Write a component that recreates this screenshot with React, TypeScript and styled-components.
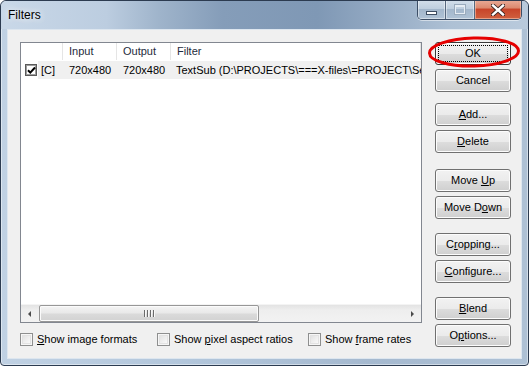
import React from "react";
import styled, { createGlobalStyle } from "styled-components";

const GlobalStyle = createGlobalStyle`
  html, body {
    margin: 0;
    padding: 0;
    background: #ffffff;
  }
  body {
    font-family: "Liberation Sans", Arial, sans-serif;
    font-size: 11px;
    color: #000;
  }
`;

const filters = [
  {
    enabled: true,
    tag: "[C]",
    input: "720x480",
    output: "720x480",
    name: "TextSub (D:\\PROJECTS\\===X-files\\=PROJECT\\Season 1\\subtitles\\episode01.srt)",
  },
];

const buttonGroups: { space: number; items: { label: string; key?: number; isDefault?: boolean }[] }[] = [
  { space: 0, items: [{ label: "OK", isDefault: true }, { label: "Cancel" }] },
  { space: 11, items: [{ label: "Add...", key: 0 }, { label: "Delete", key: 0 }] },
  { space: 16, items: [{ label: "Move Up", key: 5 }, { label: "Move Down", key: 6 }] },
  { space: 14, items: [{ label: "Cropping...", key: 1 }, { label: "Configure...", key: 0 }] },
  { space: 14, items: [{ label: "Blend", key: 0 }, { label: "Options...", key: 1 }] },
];

const options = [
  { label: "Show image formats", key: 0, width: 137 },
  { label: "Show pixel aspect ratios", key: 5, width: 151 },
  { label: "Show frame rates", key: 5, width: 0 },
];

// underline the mnemonic letter like a win32 dialog does
const Mnemonic = ({ text, at }: { text: string; at?: number }) => {
  if (at === undefined) return <span>{text}</span>;
  return (
    <span>
      {text.slice(0, at)}
      <u>{text[at]}</u>
      {text.slice(at + 1)}
    </span>
  );
};

const App = () => {
  return (
    <>
      <GlobalStyle />
      <Window>
        <TitleBar>
          <Title>Filters</Title>
          <CaptionButtons>
            <CaptionButton $width={27}>
              <MinIcon />
            </CaptionButton>
            <CaptionButton $width={28}>
              <MaxIcon />
            </CaptionButton>
            <CloseButton>
              <svg width="14" height="12" viewBox="0 0 14 12">
                <path d="M2 1.5 L12 10.5 M12 1.5 L2 10.5" stroke="#3a2320" strokeWidth="4.2" strokeLinecap="square" />
                <path d="M2 1.5 L12 10.5 M12 1.5 L2 10.5" stroke="#ffffff" strokeWidth="2.4" strokeLinecap="square" />
              </svg>
            </CloseButton>
          </CaptionButtons>
        </TitleBar>

        <Client>
          <LeftPane>
            <ListView>
              <Header>
                <HeaderCell $width={42} />
                <HeaderCell $width={54}>Input</HeaderCell>
                <HeaderCell $width={54}>Output</HeaderCell>
                <HeaderCell $width={0}>Filter</HeaderCell>
              </Header>
              {filters.map((f) => (
                <Row key={f.name}>
                  <CheckCell>
                    <ListCheck>
                      {f.enabled && (
                        <svg width="9" height="9" viewBox="0 0 9 9">
                          <polyline points="1,4.2 3.3,6.6 8,1.5" fill="none" stroke="#000" strokeWidth="2" />
                        </svg>
                      )}
                    </ListCheck>
                  </CheckCell>
                  <RowBody>
                    <Cell $width={24} $pad={3}>{f.tag}</Cell>
                    <Cell $width={54} $pad={7}>{f.input}</Cell>
                    <Cell $width={54} $pad={7}>{f.output}</Cell>
                    <Cell $width={0} $pad={6}>{f.name}</Cell>
                  </RowBody>
                </Row>
              ))}
              <HScroll>
                <ScrollArrow>
                  <ArrowLeft />
                </ScrollArrow>
                <Track>
                  <Thumb style={{ width: 220 }}>
                    <Grip>
                      <span />
                      <span />
                      <span />
                      <span />
                    </Grip>
                  </Thumb>
                </Track>
                <ScrollArrow>
                  <ArrowRight />
                </ScrollArrow>
              </HScroll>
            </ListView>

            <OptionsRow>
              {options.map((o) => (
                <OptionItem key={o.label} $width={o.width}>
                  <CheckBox />
                  <Mnemonic text={o.label} at={o.key} />
                </OptionItem>
              ))}
            </OptionsRow>
          </LeftPane>

          <ButtonColumn>
            {buttonGroups.map((g, i) => (
              <ButtonGroup key={i} $space={g.space}>
                {g.items.map((b) => (
                  <PushButton key={b.label} $default={!!b.isDefault}>
                    <Mnemonic text={b.label} at={b.key} />
                  </PushButton>
                ))}
              </ButtonGroup>
            ))}
          </ButtonColumn>

          <Annotation width="94" height="32" viewBox="0 0 94 32">
            <ellipse cx="47" cy="16" rx="44.5" ry="14" fill="none" stroke="#e60000" strokeWidth="3" transform="rotate(-1.5 47 16)" />
          </Annotation>
        </Client>
      </Window>
    </>
  );
};

const Window = styled.div`
  width: 529px;
  height: 366px;
  box-sizing: border-box;
  border: 1px solid #2c3b50;
  border-radius: 6px 6px 4px 4px;
  padding: 0 6px 6px;
  background: linear-gradient(to right, #c0d1e3 0%, #b2c6db 35%, #a5b9cf 70%, #aec1d5 100%);
  box-shadow: inset 0 0 0 1px rgba(255, 255, 255, 0.45);
  display: flex;
  flex-direction: column;
  overflow: hidden;
`;

const TitleBar = styled.div`
  height: 28px;
  margin: 0 -6px;
  padding: 0 6px 0 7px;
  display: flex;
  align-items: flex-start;
  justify-content: space-between;
  border-radius: 5px 5px 0 0;
  background: linear-gradient(
    to right,
    #c9d8e8 0%,
    #bccde0 20%,
    #9fb4cb 30%,
    #859db9 42%,
    #7f98b5 60%,
    #94aac3 72%,
    #adc0d4 85%,
    #b9cadc 100%
  );
`;

const Title = styled.div`
  font-family: "Liberation Sans", Arial, sans-serif;
  font-size: 12px;
  line-height: 29px;
  color: #000;
  text-shadow: 0 0 6px rgba(255, 255, 255, 0.9), 0 0 10px rgba(255, 255, 255, 0.7);
`;

const CaptionButtons = styled.div`
  display: flex;
  height: 19px;
  margin-top: -1px;
  border: 1px solid #3c4e66;
  border-top: none;
  border-radius: 0 0 5px 5px;
  overflow: hidden;
  box-shadow: 0 1px 0 rgba(255, 255, 255, 0.5);
`;

const CaptionButton = styled.div<{ $width: number }>`
  width: ${(p) => p.$width}px;
  height: 100%;
  display: flex;
  align-items: center;
  justify-content: center;
  border-right: 1px solid #56687f;
  background: linear-gradient(#d3dfeb 0%, #bfcfdf 45%, #a3b7cc 50%, #b0c3d6 100%);
  box-shadow: inset 0 0 0 1px rgba(255, 255, 255, 0.45);
`;

const MinIcon = styled.div`
  width: 9px;
  height: 2px;
  margin-top: 6px;
  background: #fff;
  border: 1px solid #3d4d62;
`;

const MaxIcon = styled.div`
  width: 8px;
  height: 6px;
  border: 1px solid #e6edf4;
  border-top-width: 2px;
  outline: 1px solid #9aabbd;
`;

const CloseButton = styled.div`
  width: 46px;
  height: 100%;
  display: flex;
  align-items: center;
  justify-content: center;
  background: linear-gradient(#e9ab98 0%, #dc8a70 40%, #c8452a 50%, #d0603f 100%);
  box-shadow: inset 0 0 0 1px rgba(255, 220, 200, 0.5);
`;

const Client = styled.div`
  position: relative;
  flex: 1;
  border: 1px solid #dde6ef;
  background: #f0f0f0;
  display: grid;
  grid-template-columns: 402px 76px;
  column-gap: 13px;
  align-items: start;
  padding: 12px 10px 0 12px;
`;

const LeftPane = styled.div`
  display: flex;
  flex-direction: column;
`;

const ListView = styled.div`
  height: 281px;
  box-sizing: border-box;
  border: 1px solid #828790;
  background: #fff;
  display: flex;
  flex-direction: column;
  overflow: hidden;
`;

const Header = styled.div`
  display: flex;
  height: 17px;
  flex-shrink: 0;
`;

const HeaderCell = styled.div<{ $width: number }>`
  ${(p) => (p.$width ? `width: ${p.$width}px;` : "flex: 1;")}
  box-sizing: border-box;
  border-right: 1px solid #e5e5e5;
  padding-left: 6px;
  line-height: 17px;
  color: #1e2b3c;
  white-space: nowrap;
`;

const Row = styled.div`
  display: flex;
  height: 18px;
  margin-top: 1px;
  flex-shrink: 0;
`;

const CheckCell = styled.div`
  width: 17px;
  display: flex;
  align-items: center;
  padding-left: 4px;
  box-sizing: border-box;
`;

const ListCheck = styled.div`
  width: 12px;
  height: 12px;
  box-sizing: border-box;
  border: 1px solid #5a5a5a;
  box-shadow: inset 0 0 0 1px #9d9d9d;
  background: #fff;
  display: flex;
  align-items: center;
  justify-content: center;
`;

const RowBody = styled.div`
  flex: 1;
  display: flex;
  background: #f0f0f0;
  overflow: hidden;
`;

const Cell = styled.div<{ $width: number; $pad: number }>`
  ${(p) => (p.$width ? `width: ${p.$width}px; flex-shrink: 0;` : "flex: 1;")}
  padding-left: ${(p) => p.$pad}px;
  box-sizing: border-box;
  line-height: 18px;
  white-space: nowrap;
  overflow: hidden;
  text-overflow: clip;
`;

const HScroll = styled.div`
  margin-top: auto;
  height: 17px;
  flex-shrink: 0;
  display: flex;
  background: linear-gradient(#e3e3e3, #eeeeee 30%, #f2f2f2);
  border-top: 1px solid #f4f4f4;
`;

const ScrollArrow = styled.div`
  width: 17px;
  display: flex;
  align-items: center;
  justify-content: center;
`;

const ArrowLeft = styled.div`
  width: 0;
  height: 0;
  border-top: 3.5px solid transparent;
  border-bottom: 3.5px solid transparent;
  border-right: 3.5px solid #4a4a4a;
`;

const ArrowRight = styled.div`
  width: 0;
  height: 0;
  border-top: 3.5px solid transparent;
  border-bottom: 3.5px solid transparent;
  border-left: 3.5px solid #4a4a4a;
`;

const Track = styled.div`
  flex: 1;
  display: flex;
  padding: 0 0 0 1px;
`;

const Thumb = styled.div`
  height: 100%;
  box-sizing: border-box;
  border: 1px solid #979797;
  border-radius: 2px;
  background: linear-gradient(#f4f4f4 0%, #e9e9e9 45%, #dadada 55%, #d2d2d2 100%);
  box-shadow: inset 0 0 0 1px #fbfbfb;
  display: flex;
  align-items: center;
  justify-content: center;
`;

const Grip = styled.div`
  display: flex;
  gap: 1px;

  span {
    width: 1px;
    height: 7px;
    background: #6b6b6b;
    box-shadow: 1px 0 0 #f8f8f8;
    margin-right: 1px;
  }
`;

const OptionsRow = styled.div`
  display: flex;
  margin-top: 10px;
  height: 13px;
  align-items: center;
`;

const OptionItem = styled.div<{ $width: number }>`
  ${(p) => (p.$width ? `width: ${p.$width}px;` : "flex: 1;")}
  display: flex;
  align-items: center;
  gap: 4px;
  white-space: nowrap;
  line-height: 13px;
`;

const CheckBox = styled.div`
  width: 13px;
  height: 13px;
  box-sizing: border-box;
  flex-shrink: 0;
  border: 1px solid #8e8f8f;
  background: linear-gradient(135deg, #dcdcdc, #ffffff);
  box-shadow: inset 0 0 0 1px #f6f6f6, inset 0 0 0 2px #e2e2e2;
`;

const ButtonColumn = styled.div`
  display: flex;
  flex-direction: column;
`;

const ButtonGroup = styled.div<{ $space: number }>`
  display: flex;
  flex-direction: column;
  gap: 4px;
  margin-top: ${(p) => p.$space}px;
`;

const PushButton = styled.div<{ $default: boolean }>`
  position: relative;
  width: 76px;
  height: 23px;
  box-sizing: border-box;
  border: 1px solid ${(p) => (p.$default ? "#3a3a3a" : "#707070")};
  border-radius: 3px;
  background: linear-gradient(#f2f2f2 0%, #ebebeb 50%, #dddddd 51%, #cfcfcf 100%);
  box-shadow: inset 0 0 0 1px #fcfcfc;
  display: flex;
  align-items: center;
  justify-content: center;
  line-height: 13px;
  white-space: nowrap;

  ${(p) =>
    p.$default &&
    `
    &::after {
      content: "";
      position: absolute;
      inset: 2px;
      border: 1px dotted #000;
    }
  `}
`;

const Annotation = styled.svg`
  position: absolute;
  left: 419px;
  top: 6px;
  pointer-events: none;
`;

export default App;
